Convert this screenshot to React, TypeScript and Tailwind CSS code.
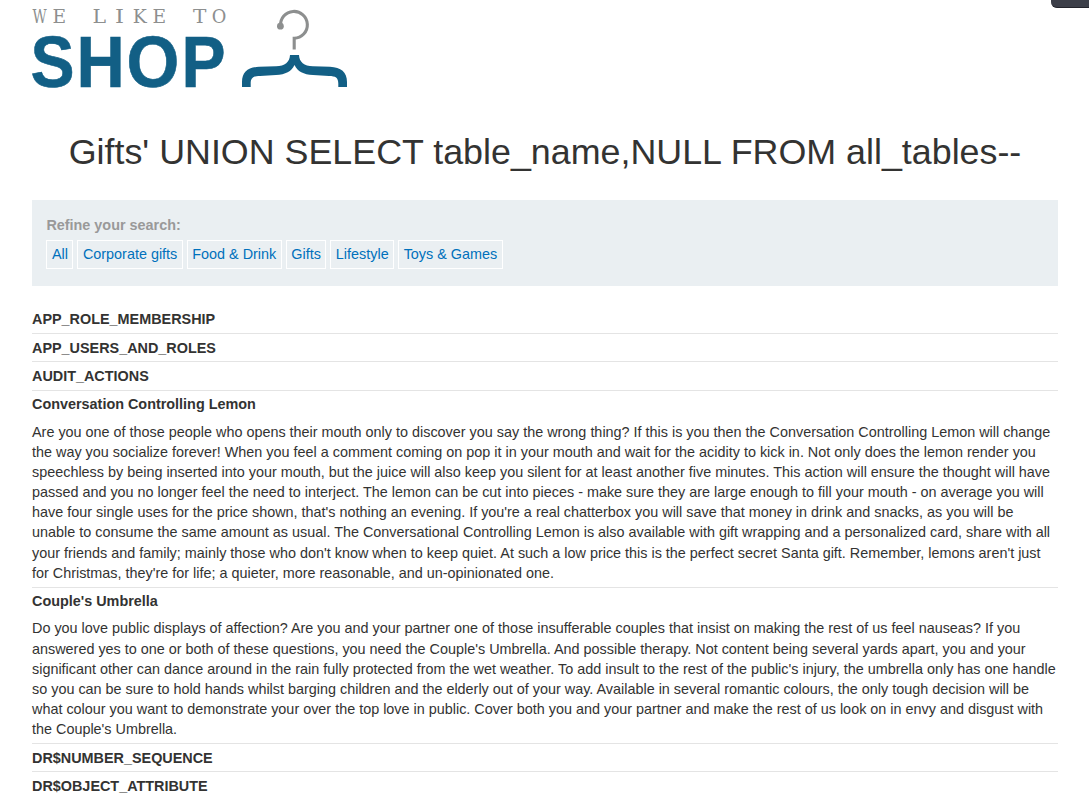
const categories = ["All", "Corporate gifts", "Food & Drink", "Gifts", "Lifestyle", "Toys & Games"];

const products: { name: string; description?: string }[] = [
  { name: "APP_ROLE_MEMBERSHIP" },
  { name: "APP_USERS_AND_ROLES" },
  { name: "AUDIT_ACTIONS" },
  {
    name: "Conversation Controlling Lemon",
    description:
      "Are you one of those people who opens their mouth only to discover you say the wrong thing? If this is you then the Conversation Controlling Lemon will change the way you socialize forever! When you feel a comment coming on pop it in your mouth and wait for the acidity to kick in. Not only does the lemon render you speechless by being inserted into your mouth, but the juice will also keep you silent for at least another five minutes. This action will ensure the thought will have passed and you no longer feel the need to interject. The lemon can be cut into pieces - make sure they are large enough to fill your mouth - on average you will have four single uses for the price shown, that's nothing an evening. If you're a real chatterbox you will save that money in drink and snacks, as you will be unable to consume the same amount as usual. The Conversational Controlling Lemon is also available with gift wrapping and a personalized card, share with all your friends and family; mainly those who don't know when to keep quiet. At such a low price this is the perfect secret Santa gift. Remember, lemons aren't just for Christmas, they're for life; a quieter, more reasonable, and un-opinionated one.",
  },
  {
    name: "Couple's Umbrella",
    description:
      "Do you love public displays of affection? Are you and your partner one of those insufferable couples that insist on making the rest of us feel nauseas? If you answered yes to one or both of these questions, you need the Couple's Umbrella. And possible therapy. Not content being several yards apart, you and your significant other can dance around in the rain fully protected from the wet weather. To add insult to the rest of the public's injury, the umbrella only has one handle so you can be sure to hold hands whilst barging children and the elderly out of your way. Available in several romantic colours, the only tough decision will be what colour you want to demonstrate your over the top love in public. Cover both you and your partner and make the rest of us look on in envy and disgust with the Couple's Umbrella.",
  },
  { name: "DR$NUMBER_SEQUENCE" },
  { name: "DR$OBJECT_ATTRIBUTE" },
];

// Letter, left edge and advance width of the spaced-out tagline
const tagline: [string, number, number][] = [
  ["W", 32.5, 14.2],
  ["E", 52.5, 13.6],
  ["L", 92.6, 13.6],
  ["I", 115, 9],
  ["K", 132.7, 14],
  ["E", 152.5, 13.6],
  ["T", 193, 13.4],
  ["O", 211.8, 14.6],
];

function Logo() {
  return (
    <svg className="block" width="330" height="100" viewBox="32 0 330 100" overflow="visible">
      <g fontFamily="'DejaVu Serif', serif" fontSize="18" fill="#8d8f8f">
        {tagline.map(([letter, x, width]) => (
          <text key={x} x={x} y="23.2" textLength={width} lengthAdjust="spacingAndGlyphs">
            {letter}
          </text>
        ))}
      </g>
      <g
        fill="#125f85"
        stroke="#125f85"
        strokeWidth=".6"
        fontFamily="'Liberation Sans', Arial, sans-serif"
        fontWeight="700"
        fontSize="72.2"
      >
        <text transform="translate(30.4 87.1) scale(.915 1)">S</text>
        <text transform="translate(76.5 87.1) scale(.925 1)">H</text>
        <text transform="translate(126.4 87.1) scale(.94 1)">O</text>
        <text transform="translate(181.6 87.1) scale(.915 1)">P</text>
      </g>
      <path
        d="M280.6 26 A13.4 13.4 0 1 1 294.2 38.2 V49.5"
        fill="none"
        stroke="#8d8f8f"
        strokeWidth="3.1"
      />
      <circle cx="280.4" cy="26.2" r="3.4" fill="#8d8f8f" />
      <path
        d="M290 55 H299 C299.3 62 304 66 313 66.3 L330 66.8 C341 67.3 347 72 347 82 V87 H338.3 V83.5 C338.3 77.5 335.5 76 329 75.9 L313 75 C303.5 74.5 297.5 71.5 294.5 65 C291.5 71.5 285.5 74.5 276 75 L260 75.9 C253.5 76 250.7 77.5 250.7 83.5 V87 H242 V82 C242 72 248 67.3 259 66.8 L276 66.3 C285 66 289.7 62 290 55 Z"
        fill="#125f85"
      />
    </svg>
  );
}

export default function App() {
  return (
    <div className="relative h-[800px] overflow-hidden bg-white px-8 font-['Liberation_Sans',Arial,sans-serif] text-[14.4px] leading-[20.16px] text-[#333332]">
      <div className="absolute -top-4 right-[-10px] h-6 w-12 rounded-md border-b border-[#23242c] bg-[#3c3f49]" />
      <Logo />
      <h1 className="mt-[27px] mr-[-1px] text-center text-[35.84px] leading-[50.4px]">
        Gifts' UNION SELECT table_name,NULL FROM all_tables--
      </h1>
      <section className="mt-[22.5px] mr-[-1px] h-[86px] bg-[#eaeff2] px-[14.4px] pt-[15.2px]">
        <div className="font-bold text-[#999999]">Refine your search:</div>
        <nav className="mt-[4.6px] flex gap-1">
          {categories.map((c) => (
            <a key={c} className="border border-white px-[4.5px] py-[3.5px] text-[#0071bc]">
              {c}
            </a>
          ))}
        </nav>
      </section>
      <main className="mt-[19.8px] mr-[-1px]">
        {products.map((p) => (
          <article key={p.name} className="border-b border-[#e4e4e4]">
            <h2 className="py-[3.6px] font-bold">{p.name}</h2>
            {p.description && <p className="py-[3.6px]">{p.description}</p>}
          </article>
        ))}
      </main>
    </div>
  );
}
